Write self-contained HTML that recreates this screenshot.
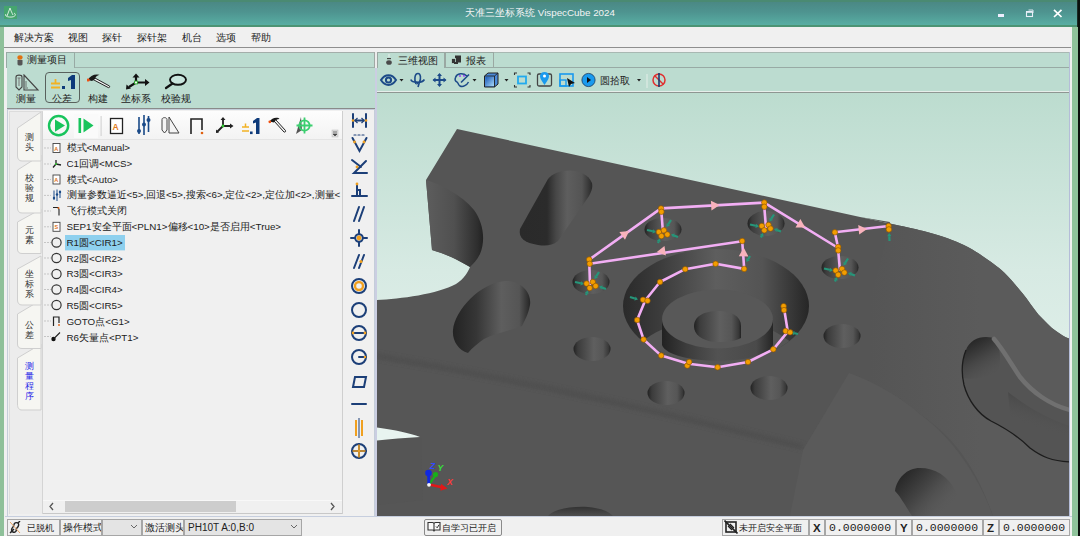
<!DOCTYPE html>
<html><head><meta charset="utf-8">
<style>
*{margin:0;padding:0;box-sizing:border-box}
html,body{width:1080px;height:536px;overflow:hidden;background:#f0f0f0;font-family:"Liberation Sans",sans-serif;font-size:9.7px;color:#222}
.a{position:absolute}
#title{left:0;top:0;width:1080px;height:27px;background:linear-gradient(#4a8682,#4e9490 45%,#5ab2a6)}
#lstrip{left:0;top:27px;width:4px;height:509px;background:#8ec099}
#rstrip{left:1072px;top:27px;width:6.5px;height:509px;background:#8fc39b;border-left:0}
#menu{left:4px;top:27px;width:1067px;height:21px;background:#f0f0f0;border-bottom:1px solid #8e8e8e}
#menu span{position:absolute;top:5px}
.teal{background:#bcdcd0}
.tab{position:absolute;top:52px;height:16px;border:1px solid #98aaa4;border-bottom:none;background:#bcdcd0}
.rib span{position:absolute;font-size:9.7px}
.tree{position:absolute;left:45px;width:300px}
.row{position:absolute;left:0;height:15px;white-space:nowrap;font-size:9.7px;color:#222}
.vt{position:absolute;font-size:9.2px;color:#333;width:11px;line-height:9.8px;text-align:center}
.sb{position:absolute;top:518.5px;height:17.5px;border:1px solid #a6a6a6;background:#f0f0f0;font-size:9.8px;line-height:16px;padding-left:3px;white-space:nowrap;overflow:hidden}
.mono{font-family:"Liberation Mono",monospace;font-size:11.5px}
</style></head><body>
<div id="title" class="a"></div>
<div class="a" style="left:0;top:0;width:1080px;height:2px;background:#4a8a72"></div>
<div class="a" style="left:0;top:25px;width:1080px;height:2px;background:#4c9474"></div>
<div class="a" style="left:1077px;top:0;width:3px;height:27px;background:#1a2a24"></div>
<svg class="a" style="left:4px;top:6px" width="13" height="13" viewBox="0 0 13 13"><rect width="13" height="13" fill="#45a56e"/><path d="M6,2 L3,10 M6,2 C7,5 8,7 9,9 M2,8 C0,10 4,11.5 8,11 C12,10.5 12,8 10,7" fill="none" stroke="#e8f4ec" stroke-width="0.9"/></svg>
<svg class="a" style="left:995px;top:8px" width="70" height="12" viewBox="995 8 70 12"><rect x="998" y="14" width="6" height="3" fill="#eef"/><rect x="1026.5" y="12" width="6" height="4.5" fill="none" stroke="#e8eef8" stroke-width="1.1"/><rect x="1026" y="11" width="6.5" height="1.6" fill="#e8eef8"/><path d="M1028.5,10 L1033,10 L1033,13" fill="none" stroke="#e8eef8" stroke-width="0.9"/><path d="M1054,9.8 L1061.5,17 M1061.5,9.8 L1054,17" stroke="#fff" stroke-width="1.7"/></svg>
<div class="a" style="left:0;top:7.3px;width:1080px;text-align:center;color:#f4f4f4;font-size:9.8px">天准三坐标系统 VispecCube 2024</div>
<div id="lstrip" class="a"></div>
<div id="rstrip" class="a"></div>
<div class="a" style="left:1078.3px;top:0;width:2px;height:536px;background:#0a0f0c"></div>
<div id="menu" class="a">
<span style="left:10px">解决方案</span><span style="left:64px">视图</span><span style="left:98px">探针</span><span style="left:133px">探针架</span><span style="left:178px">机台</span><span style="left:212px">选项</span><span style="left:247px">帮助</span>
</div>

<!-- LEFT PANEL -->
<div class="a teal" style="left:7px;top:52px;width:368px;height:57px;border-top:1px solid #a4aeaa"></div>
<div class="a" style="left:74.8px;top:67px;width:300px;height:1px;background:#9fb3ac"></div>
<div class="a" style="left:7px;top:108px;width:368px;height:1px;background:#8a8a8a"></div>
<div class="tab" style="left:6.3px;width:68.5px;height:16px"></div>
<svg class="a" style="left:16px;top:55px" width="8" height="11" viewBox="0 0 8 11"><ellipse cx="4" cy="2.5" rx="2.6" ry="2.3" fill="#e07010"/><path d="M1.5,5 L6.5,5 L6.5,9 C6.5,11 1.5,11 1.5,9Z" fill="#555"/></svg>
<div class="a" style="left:27px;top:53px;font-size:10px">测量项目</div>
<div class="rib">
<span style="left:16px;top:92.5px">测量</span>
<span style="left:52px;top:92.5px">公差</span>
<span style="left:88px;top:92.5px">构建</span>
<span style="left:121px;top:92.5px">坐标系</span>
<span style="left:161px;top:92.5px">校验规</span>
</div>
<div class="a" style="left:45px;top:72px;width:35px;height:31px;border:1.6px solid #59615d;border-radius:4px"></div>
<!-- ribbon icons -->
<svg class="a" style="left:14px;top:74px" width="26" height="18" viewBox="0 0 26 18">
<path d="M2,3 C2,0.5 8,0.5 8,3 L8,13 L5,16 L2,13Z" fill="none" stroke="#444" stroke-width="1.1"/><path d="M3.5,4 L6.5,4 M5,4 L5,12" stroke="#777" stroke-width="1"/>
<path d="M10,1 L24,16 L10,16Z" fill="none" stroke="#444" stroke-width="1.1"/><path d="M11,8 L13,8 M11,10 L13,10 M11,12 L13,12 M11,14 L14,14" stroke="#555" stroke-width="0.8"/>
</svg>
<svg class="a" style="left:49px;top:73px" width="29" height="18" viewBox="0 0 29 18">
<path d="M2,10.5 L11,10.5 M6.5,6 L6.5,11 M2,14.5 L11,14.5" stroke="#f2b224" stroke-width="1.8"/>
<rect x="13" y="13" width="3" height="3" fill="#0e3a7a"/><path d="M19,5 L23,2 L26,2 L26,16 L22,16 L22,7 L19,8Z" fill="#0e3a7a"/>
</svg>
<svg class="a" style="left:87px;top:73px" width="24" height="18" viewBox="0 0 24 18"><path d="M7,4.5 L22.5,13 C23,14 22.3,15 21.3,14.6 L6,6.5Z" fill="#f2f2f2" stroke="#222" stroke-width="1"/><path d="M0.8,7 C2.5,3.5 6,1.5 10,1.5 L12.5,1.8 C10,2.5 8.5,4 8,6 L5,8 Z" fill="#1a1a1a"/><circle cx="1.2" cy="7" r="1.6" fill="#f05010"/></svg>
<svg class="a" style="left:125px;top:73px" width="26" height="18" viewBox="0 0 26 18"><path d="M11,9.5 L11,3.5 M11,9.5 L21,9.5 M11,9.5 L4,14" stroke="#111" stroke-width="2.2"/><path d="M7.5,4.5 L11,0.5 L14.5,4.5Z M20,6 L24.5,9.5 L20,13Z M1.5,11.5 L1,16.5 L6,15.5Z" fill="#111"/><rect x="9.6" y="8.1" width="2.8" height="2.8" fill="#fff" stroke="#2a2" stroke-width="0.9"/></svg>
<svg class="a" style="left:164px;top:73px" width="24" height="18" viewBox="0 0 24 18"><ellipse cx="14" cy="6.8" rx="8" ry="5" fill="#c8e4dc" stroke="#111" stroke-width="1.9"/><path d="M8.5,10.5 L2,15" stroke="#111" stroke-width="2.2" stroke-linecap="round"/></svg>

<!-- tree panel -->
<div class="a" style="left:7px;top:109px;width:368px;height:408px;background:#f0f0f0;border:1px solid #c4cdd9"></div>
<div class="a" style="left:9px;top:111px;width:34px;height:403px;background:#ececec;border-right:1px solid #d4d4d4;border-left:1px solid #dcdcdc;border-top:1px solid #dcdcdc"></div>
<svg class="a" style="left:9px;top:111px" width="34" height="403" viewBox="9 111 34 403">
<g fill="#f6f6f2" stroke="#cfcfcf" stroke-width="1">
<path d="M41,344 L17.5,358 L17.5,404 C17.5,408 19,410 22,410 L41,410Z"/>
<path d="M41,300 L17.5,314 L17.5,344 C17.5,347 19,348.5 22,348.5 L41,348.5Z"/>
<path d="M41,256 L17.5,269 L17.5,300 C17.5,303 19,305 22,305 L41,305Z"/>
<path d="M41,209 L17.5,222 L17.5,249 C17.5,252 19,253.5 22,253.5 L41,253.5Z"/>
<path d="M41,155 L17.5,170 L17.5,208 C17.5,211 19,213 22,213 L41,213Z"/>
<path d="M41,112 L17.5,128 L17.5,156 C17.5,159 19,161 22,161 L41,161Z"/>
</g>
</svg>
<div class="vt" style="left:24px;top:133.2px">测<br>头</div>
<div class="vt" style="left:24px;top:174.3px">校<br>验<br>规</div>
<div class="vt" style="left:24px;top:226.2px">元<br>素</div>
<div class="vt" style="left:24px;top:270.3px">坐<br>标<br>系</div>
<div class="vt" style="left:24px;top:321.2px">公<br>差</div>
<div class="vt" style="left:24px;top:362.4px;color:#2828e8">测<br>量<br>程<br>序</div>

<div class="a" style="left:43px;top:111px;width:299px;height:29px;background:linear-gradient(#fdfdfd,#f3f3f3);border-bottom:1px solid #e4e4e4"></div>
<div class="a" style="left:341.5px;top:111px;width:1px;height:403px;background:#cfcfcf"></div>
<!-- tree toolbar icons -->
<svg class="a" style="left:43px;top:111px" width="299" height="29" viewBox="43 111 299 29">
<circle cx="58.6" cy="125.6" r="9.6" fill="none" stroke="#18c45c" stroke-width="2.4"/><path d="M55,119.5 L65,125.6 L55,131.7Z" fill="#18c45c"/>
<rect x="74" y="114" width="24" height="24" fill="#fafafa"/>
<rect x="78.5" y="118" width="2.6" height="15" fill="#18c45c"/><path d="M83.5,118.5 L93.5,125.6 L83.5,132.5Z" fill="#18c45c"/>
<rect x="100.6" y="116" width="1" height="20" fill="#d0d0d0"/>
<rect x="110.5" y="118.5" width="12" height="15" fill="#fff" stroke="#222" stroke-width="1.3"/><text x="112.5" y="130" font-family="Liberation Sans" font-size="8.5" font-weight="bold" fill="#e07a20">A</text>
<path d="M139,117 L139,134 M144,115 L144,135 M148.5,116 L148.5,132" stroke="#1a4a88" stroke-width="1.6"/><circle cx="139" cy="131" r="2" fill="#1a4a88"/><circle cx="144" cy="124.5" r="2" fill="#1a4a88"/><circle cx="148.5" cy="120" r="2" fill="#1a4a88"/>
<g transform="translate(161,117)"><path d="M1,2.5 C1,0 6,0 6,2.5 L6,13 L3.5,16 L1,13Z" fill="#f4f4f4" stroke="#444" stroke-width="1"/><path d="M8,0 L18,16 L8,16Z" fill="#f4f4f4" stroke="#444" stroke-width="1"/></g>
<path d="M191,134 L191,119 L202,119 L202,130" fill="none" stroke="#222" stroke-width="1.6"/><circle cx="202" cy="133" r="1.3" fill="#e06010"/>
<g transform="translate(216,117)"><path d="M7,9 L7,2 M7,9 L16,9 M7,9 L1,15" stroke="#222" stroke-width="1.8"/><path d="M4.5,3 L7,0 L9.5,3Z M14,6.5 L17.5,9 L14,11.5Z M0,12.5 L0,16 L3,15.5Z" fill="#222"/><circle cx="7" cy="9" r="1.4" fill="#3c3"/></g>
<path d="M242,127 L249,127 M245.5,123.5 L245.5,127.5 M242,131 L249,131" stroke="#f2b224" stroke-width="1.5"/>
<rect x="250" y="131.5" width="2.6" height="2.6" fill="#0e3a7a"/><path d="M253,121 L257,118 L259.5,118 L259.5,134 L256,134 L256,122.5 L253,123.5Z" fill="#0e3a7a"/>
<g transform="translate(268,117)"><path d="M7.5,2.5 L17.5,13.5 C18,14.5 17,15.5 16,15 L6,4Z" fill="#f4f4f4" stroke="#222" stroke-width="1"/><path d="M1.5,4.5 C3.5,1.5 7,0 10.5,1 L11.5,2 C9,2 7,3.5 6,5.5 Z" fill="#1a1a1a"/><circle cx="1.8" cy="4.8" r="1.4" fill="#f05010"/></g>
<g transform="translate(295,116)"><path d="M6,1 L1,18 L7,14Z" fill="#555"/><circle cx="9.5" cy="9.5" r="5.2" fill="none" stroke="#3ccf70" stroke-width="1.8"/><path d="M9.5,1.5 L9.5,17.5 M1.5,9.5 L17.5,9.5" stroke="#3ccf70" stroke-width="1.8"/></g>
<rect x="332" y="130" width="6" height="7" fill="#ddd" stroke="#bbb" stroke-width="0.5"/><path d="M333,134 L337,134 L335,136Z M333,132 L337,132" stroke="#444" stroke-width="0.7" fill="#444"/>
</svg>

<!-- tree rows -->
<svg class="a" style="left:43px;top:140px" width="299" height="210" viewBox="43 140 299 210">
<g stroke="#9a9a9a" stroke-width="1" stroke-dasharray="1,2">
<path d="M44.5,148 L51,148 M44.5,164 L51,164 M44.5,179.5 L51,179.5 M44.5,195.4 L51,195.4 M44.5,211 L51,211 M44.5,226.8 L51,226.8 M44.5,242.5 L51,242.5 M44.5,258 L51,258 M44.5,274 L51,274 M44.5,289.5 L51,289.5 M44.5,305 L51,305 M44.5,321 L51,321 M44.5,336.5 L51,336.5"/>
</g>
<g fill="none" stroke="#333" stroke-width="1.2">
<circle cx="56.5" cy="242.5" r="4.6"/><circle cx="56.5" cy="258" r="4.6"/><circle cx="56.5" cy="274" r="4.6"/><circle cx="56.5" cy="289.5" r="4.6"/><circle cx="56.5" cy="305" r="4.6"/>
</g>
<rect x="53" y="143.5" width="7" height="9" fill="#fff" stroke="#444" stroke-width="0.9"/><text x="54.3" y="150.5" font-size="5.5" fill="#e07020" font-family="Liberation Sans" font-weight="bold">A</text>
<rect x="53" y="175" width="7" height="9" fill="#fff" stroke="#444" stroke-width="0.9"/><text x="54.3" y="182" font-size="5.5" fill="#e07020" font-family="Liberation Sans" font-weight="bold">A</text>
<rect x="53" y="222.3" width="7" height="9" fill="#fff" stroke="#444" stroke-width="0.9"/><text x="54.5" y="229.3" font-size="5.5" fill="#e07020" font-family="Liberation Sans" font-weight="bold">S</text>
<g transform="translate(52,159)"><path d="M4,5 L4,1 M4,5 L9,6 M4,5 L1,8.5" stroke="#222" stroke-width="1.3"/><circle cx="4" cy="5" r="1" fill="#3c3"/></g>
<path d="M54,190.5 L54,200 M57,189.5 L57,201 M60,190.5 L60,198" stroke="#1a4a88" stroke-width="1"/><circle cx="54" cy="198" r="1.2" fill="#1a4a88"/><circle cx="57" cy="194.5" r="1.2" fill="#1a4a88"/><circle cx="60" cy="192" r="1.2" fill="#1a4a88"/>
<path d="M53,207.5 L58,207.5 L59,209.5 L59,215.5" fill="none" stroke="#222" stroke-width="1.1"/><circle cx="58.5" cy="208" r="0.9" fill="#e06010"/>
<path d="M53.5,326 L53.5,317 L59,317 L59,323" fill="none" stroke="#222" stroke-width="1.2"/><circle cx="59" cy="325" r="0.9" fill="#e06010"/>
<circle cx="53.5" cy="339" r="2.2" fill="#111"/><path d="M54,338.5 L60,332.5" stroke="#222" stroke-width="1.1"/>
<rect x="65" y="235" width="60" height="15.4" fill="#8ed0ee"/>
</svg>
<div class="a" style="left:66.5px;top:140px;width:275px;height:210px;overflow:hidden;white-space:nowrap;font-size:9.8px;line-height:15.8px;color:#222">
<div style="height:15.8px">模式&lt;Manual&gt;</div>
<div style="height:15.8px">C1回调&lt;MCS&gt;</div>
<div style="height:15.8px">模式&lt;Auto&gt;</div>
<div style="height:15.8px">测量参数逼近&lt;5&gt;,回退&lt;5&gt;,搜索&lt;6&gt;,定位&lt;2&gt;,定位加&lt;2&gt;,测量&lt;</div>
<div style="height:15.8px">飞行模式关闭</div>
<div style="height:15.8px">SEP1安全平面&lt;PLN1&gt;偏移&lt;10&gt;是否启用&lt;True&gt;</div>
<div style="height:15.8px">R1圆&lt;CIR1&gt;</div>
<div style="height:15.8px">R2圆&lt;CIR2&gt;</div>
<div style="height:15.8px">R3圆&lt;CIR3&gt;</div>
<div style="height:15.8px">R4圆&lt;CIR4&gt;</div>
<div style="height:15.8px">R5圆&lt;CIR5&gt;</div>
<div style="height:15.8px">GOTO点&lt;G1&gt;</div>
<div style="height:15.8px">R6矢量点&lt;PT1&gt;</div>
</div>
<!-- scrollbar -->
<div class="a" style="left:43px;top:499.5px;width:299px;height:1px;background:#f8f8f8"></div>
<div class="a" style="left:43px;top:500.5px;width:299px;height:12.5px;background:#f0f0f0"></div>
<div class="a" style="left:43px;top:513px;width:299px;height:1px;background:#c8c8c8"></div>
<div class="a" style="left:65px;top:501px;width:171px;height:11px;background:#cdcdcd"></div>
<svg class="a" style="left:43px;top:500px" width="299" height="13" viewBox="43 500 299 13"><path d="M53,503 L50,506.5 L53,510 M331,503 L334,506.5 L331,510" fill="none" stroke="#555" stroke-width="1.3"/></svg>

<!-- vertical toolbar -->
<svg class="a" style="left:343px;top:109px" width="32" height="360" viewBox="343 109 32 360">
<g stroke="#1c3f78" stroke-width="2" fill="none" stroke-linecap="round">
<path d="M353,114 L353,127 M366,114 L366,127 M355,120.5 L364,120.5"/>
<path d="M352,137 L359,151 L366,137 M352,137 L366,137" stroke-width="0"/>
<path d="M352.5,138 L359.5,151 L366.5,138"/><path d="M354,135 L356,135 M358,135 L360,135 M362,135 L364,135" stroke-width="1.2"/>
<path d="M352,160 L361,167 M366,161 L354,173 L367,173"/>
<path d="M352,196 L367,196 M357,184 L357,195 M357,190 L360,190 L360,195"/>
<path d="M354,221 L359,207 M359,221 L364,207"/>
<circle cx="359" cy="238" r="3.8"/><path d="M359,230 L359,234 M359,242 L359,246 M351,238 L355,238 M363,238 L367,238"/>
<path d="M354,268 L359,255 M359,268 L364,255"/>
<circle cx="359" cy="286" r="7"/>
<circle cx="359" cy="310" r="7"/>
<circle cx="359" cy="333" r="7"/><path d="M352,333 L366,333"/>
<circle cx="359" cy="357" r="7"/><path d="M359,357 L366,357"/>
<path d="M353,387 L355,377 L366,377 L364,387Z"/>
<path d="M352,404 L366,404"/>
<circle cx="359" cy="451" r="7"/><path d="M352,451 L366,451 M359,444 L359,458"/>
</g>
<path d="M355,120.5 L357.5,118 M355,120.5 L357.5,123 M364,120.5 L361.5,118 M364,120.5 L361.5,123" stroke="#1c3f78" stroke-width="1.2" fill="none"/>
<circle cx="353" cy="120.5" r="1.3" fill="#f0a020"/><circle cx="366" cy="120.5" r="1.3" fill="#f0a020"/>
<circle cx="354.5" cy="142" r="1.4" fill="#f0a020"/><circle cx="364" cy="142" r="1.4" fill="#f0a020"/>
<circle cx="357" cy="167" r="1.4" fill="#f0a020"/>
<circle cx="357" cy="184" r="1.4" fill="#f0a020"/>
<circle cx="359" cy="238" r="2.4" fill="#f0a020"/>
<circle cx="361" cy="261.5" r="1.6" fill="#f0a020"/>
<circle cx="359" cy="286" r="4" fill="none" stroke="#f0a020" stroke-width="2.4"/>
<circle cx="353" cy="333" r="1.4" fill="#f0a020"/><circle cx="365" cy="333" r="1.4" fill="#f0a020"/>
<circle cx="365" cy="357" r="1.3" fill="#f0a020"/>
<path d="M356,420 L356,436 M362,420 L362,436" stroke="#f0a020" stroke-width="2"/><path d="M359,418 L359,438" stroke="#1c3f78" stroke-width="1"/>
<path d="M352.5,451 L365.5,451 M359,444.5 L359,457.5" stroke="#f0a020" stroke-width="1.6"/>
</svg>

<!-- RIGHT PANEL -->
<div class="a" style="left:374px;top:52px;width:3.6px;height:15.5px;background:#ececec;border-left:1px solid #a0a8a4;border-right:1px solid #a0a8a4"></div>
<div class="a" style="left:374.5px;top:67.5px;width:2.5px;height:449.5px;background:#cbcee2"></div>
<div class="a teal" style="left:377px;top:52px;width:693px;height:41px;border-right:1px solid #a8b8b2"></div>
<div class="a" style="left:377px;top:52px;width:693px;height:1px;background:#a8b8b2"></div>
<div class="a" style="left:445px;top:67px;width:625px;height:1px;background:#98aaa4"></div>
<div class="a" style="left:377px;top:91px;width:693px;height:1px;background:#e6eeea"></div>
<div class="a" style="left:377px;top:92px;width:693px;height:1px;background:#8e9692"></div>
<div class="tab" style="left:377px;width:68px;height:16px;border-color:#9aa8a2"></div>
<div class="tab" style="left:445px;width:49px;height:15px;border-color:#9aa8a2"></div>
<svg class="a" style="left:385px;top:54px" width="8" height="12" viewBox="0 0 8 12"><path d="M4,0 L4,3" stroke="#f0f0f0" stroke-width="0.9"/><path d="M2,4.6 L6,4.6" stroke="#444" stroke-width="1.2"/><ellipse cx="4" cy="8.5" rx="2.8" ry="2.3" fill="#4a4a4a"/></svg>
<div class="a" style="left:397.5px;top:53.5px;font-size:10px">三维视图</div>
<svg class="a" style="left:451px;top:55px" width="11" height="10" viewBox="0 0 11 10"><rect x="4" y="0.5" width="6" height="7" fill="#333"/><rect x="0.5" y="3.5" width="4" height="5" fill="#333" stroke="#bcdcd0" stroke-width="0.8"/><rect x="3" y="7" width="4" height="2" fill="#333"/></svg>
<div class="a" style="left:466px;top:53.5px;font-size:10px">报表</div>
<svg class="a" style="left:377px;top:68px" width="300" height="23" viewBox="377 68 300 23">
<g fill="none" stroke="#1c4a88" stroke-width="2">
<path d="M381,80 C385,73.5 392,73.5 396,80 C392,86.5 385,86.5 381,80Z"/><circle cx="388.5" cy="80" r="2.6"/>
<path d="M410.8,79.5 C412,83 422,83.5 424.4,79.5" stroke-width="1.6"/><path d="M416,84 C414,80 414.5,73.5 418,73.5 C421,73.5 421,79 419.5,82 L418,87" stroke-width="1.6"/>
<path d="M439.5,74.5 L439.5,85.5 M433.5,80 L445.5,80"/>
<path d="M467,76 C463,72.5 457,73 455.5,77.5 C454.5,80 456,81.5 457,82 C458.5,83 458,85 460,86 C463,87.5 467,85 468.5,82" stroke-width="1.5"/><path d="M461,82.5 L469,74.5" stroke-width="1.6"/>
</g>
<path d="M439.5,73 L437,76 L442,76Z M439.5,87 L437,84 L442,84Z M432.5,80 L435.5,77.5 L435.5,82.5Z M446.5,80 L443.5,77.5 L443.5,82.5Z" fill="#1c4a88"/><path d="M416.5,81 L419,83 L416.5,85Z" fill="#1c4a88"/>
<circle cx="460" cy="76" r="1.1" fill="#9a50f0"/><circle cx="464" cy="75.8" r="1.1" fill="#9a50f0"/>
<path d="M399.5,79 L403.5,79 L401.5,81.5Z M472.5,79 L476.5,79 L474.5,81.5Z M504.5,79 L508.5,79 L506.5,81.5Z M637,79 L641,79 L639,81.5Z" fill="#222"/>
<path d="M484.5,76 L488,73 L498,73 L498,84 L494.5,87 L484.5,87Z" fill="#4a8ad8" stroke="#222" stroke-width="1"/><path d="M484.5,76 L494.5,76 L498,73 M494.5,76 L494.5,87" fill="none" stroke="#222" stroke-width="0.9"/><defs><linearGradient id="cubeg" x1="0" y1="0" x2="1" y2="1"><stop offset="0" stop-color="#1a5ab8"/><stop offset="1" stop-color="#a8d8f8"/></linearGradient></defs><path d="M485.5,77 L494,77 L494,86 L485.5,86Z" fill="url(#cubeg)"/>
<path d="M514.5,75 L514.5,73 L517,73 M527.5,73 L530,73 L530,75 M514.5,85 L514.5,87 L517,87 M527.5,87 L530,87 L530,85" fill="none" stroke="#333" stroke-width="1.1"/>
<rect x="518" y="76.5" width="8" height="7" fill="none" stroke="#22aaee" stroke-width="1.8"/>
<rect x="537.5" y="74" width="14" height="12" rx="1.5" fill="none" stroke="#444" stroke-width="1.3"/><path d="M544.5,85 C541,80 540,78 540,76 C540,73.5 542,72 544.5,72 C547,72 549,73.5 549,76 C549,78 548,80 544.5,85Z" fill="#1a9aee"/><circle cx="544.5" cy="76" r="1.5" fill="#fff"/>
<rect x="560" y="74" width="13" height="12" fill="none" stroke="#1a9aee" stroke-width="1.6"/><rect x="560" y="80" width="6" height="6" fill="none" stroke="#1a9aee" stroke-width="1.4"/><path d="M567,78 L575,83 L571,84 L569,87Z" fill="#111"/>
<circle cx="588.5" cy="80" r="6.6" fill="#1a9aee" stroke="#1c3a60" stroke-width="0.8"/><path d="M587,77 L591,80 L587,83Z" fill="#111"/>
<rect x="646.5" y="74" width="1" height="14" fill="#e4eee8"/>
<circle cx="659" cy="80" r="6" fill="none" stroke="#e03030" stroke-width="1.5"/><path d="M654.5,75.5 L663.5,84.5" stroke="#e03030" stroke-width="1.4"/><path d="M659,73 L659,87" stroke="#1a3a70" stroke-width="1.6"/>
</svg>
<div class="a" style="left:599.5px;top:74px;font-size:10px">圆拾取</div>

<!-- 3D view -->
<div class="a" style="left:1069.3px;top:52px;width:1.2px;height:465px;background:#b4bcd8"></div>
<div class="a" style="left:1070.5px;top:52px;width:1.5px;height:484px;background:#f0f2f0"></div>
<div class="a" style="left:377px;top:93px;width:692.3px;height:423px;background:linear-gradient(#bddcd0,#dcebe5);overflow:hidden">
<svg width="693" height="423" viewBox="377 93 693 423" style="position:absolute;left:0;top:0">
<defs>
<linearGradient id="bg" x1="0" y1="0" x2="0" y2="1"><stop offset="0" stop-color="#bcdccf"/><stop offset="0.42" stop-color="#d7eae3"/><stop offset="0.8" stop-color="#e4f2ed"/><stop offset="1" stop-color="#eaf5f1"/></linearGradient>
<linearGradient id="cut" gradientUnits="userSpaceOnUse" x1="428" y1="0" x2="486" y2="0"><stop offset="0" stop-color="#5c5c5c"/><stop offset="0.45" stop-color="#505050"/><stop offset="0.85" stop-color="#2e2e2e"/><stop offset="1" stop-color="#1c1c1c"/></linearGradient>
<linearGradient id="slot" gradientUnits="userSpaceOnUse" x1="519" y1="0" x2="593" y2="0"><stop offset="0" stop-color="#2a2a2a"/><stop offset="0.38" stop-color="#2b2b2b"/><stop offset="0.5" stop-color="#474747"/><stop offset="0.65" stop-color="#5e5e5e"/><stop offset="0.85" stop-color="#545454"/><stop offset="1" stop-color="#262626"/></linearGradient>
<linearGradient id="hole" gradientUnits="userSpaceOnUse" x1="453" y1="0" x2="531" y2="0"><stop offset="0" stop-color="#232323"/><stop offset="0.3" stop-color="#363636"/><stop offset="0.62" stop-color="#5e5e5e"/><stop offset="0.85" stop-color="#555"/><stop offset="1" stop-color="#222"/></linearGradient>
<linearGradient id="sh" x1="0" y1="0" x2="1" y2="0"><stop offset="0" stop-color="#222"/><stop offset="0.12" stop-color="#3c3c3c"/><stop offset="0.55" stop-color="#5f5f5f"/><stop offset="0.8" stop-color="#565656"/><stop offset="0.95" stop-color="#383838"/><stop offset="1" stop-color="#222"/></linearGradient>
<linearGradient id="cb" x1="0" y1="0" x2="1" y2="0"><stop offset="0" stop-color="#2a2a2a"/><stop offset="0.2" stop-color="#3c3c3c"/><stop offset="0.5" stop-color="#5e5e5e"/><stop offset="0.75" stop-color="#545454"/><stop offset="1" stop-color="#262626"/></linearGradient>
<linearGradient id="boss" x1="0" y1="0" x2="1" y2="0"><stop offset="0" stop-color="#222"/><stop offset="0.22" stop-color="#3c3c3c"/><stop offset="0.5" stop-color="#525252"/><stop offset="0.85" stop-color="#4a4a4a"/><stop offset="1" stop-color="#262626"/></linearGradient>
<linearGradient id="bh" x1="0" y1="0" x2="1" y2="1"><stop offset="0" stop-color="#262626"/><stop offset="0.6" stop-color="#4e4e4e"/><stop offset="1" stop-color="#555"/></linearGradient>
<radialGradient id="shoulder" cx="0.6" cy="0.3" r="0.6"><stop offset="0" stop-color="#5e5e5e"/><stop offset="1" stop-color="#555" stop-opacity="0"/></radialGradient>
<linearGradient id="shoulderg" gradientUnits="userSpaceOnUse" x1="870" y1="300" x2="980" y2="300"><stop offset="0" stop-color="#555"/><stop offset="1" stop-color="#5b5b5b"/></linearGradient>
<g id="ball"><circle r="2.75" fill="#f29d00" stroke="#8a5000" stroke-width="0.6"/></g>
</defs>
<rect x="377" y="93" width="693" height="423" fill="url(#bg)"/>
<path d="M457,129 L900,225.7 C915,228.5 940,235 952,240 C965,245 970,248 978,253 C990,261 997,266 1004.4,272.7 C1012,280 1017,287 1022.7,293.5 C1028,300 1033,308 1038.4,314.4 C1045,321 1050,327 1056.7,331.4 C1061,334.5 1065,337 1070,339 L1070,516 L377,516 L377,440 L419,437 L377,428 L377,300 C400,299 438,294 456,284 C464,279 468,272 470,267 C455,258 445,254 432,250 L426,180 Z" fill="#555"/>
<!-- shading regions -->
<path d="M860,217 L900,225.7 C915,228.5 940,235 952,240 C965,245 970,248 978,253 C990,261 997,266 1004.4,272.7 C1012,280 1017,287 1022.7,293.5 C1028,300 1033,308 1038.4,314.4 C1045,321 1050,327 1056.7,331.4 C1061,334.5 1065,337 1070,339 L1070,516 L993,516 C980,478 960,440 921,415 C900,400 870,380 849,373 C860,330 880,270 890,222 Z" fill="url(#shoulderg)"/>
<path d="M377,359 C560,390 700,425 803,450 L849,373 C875,382 905,400 921,415 C955,440 980,480 993,516 L377,516 Z" fill="#565656"/>
<filter id="blur2" x="-10%" y="-50%" width="120%" height="200%"><feGaussianBlur stdDeviation="2"/></filter>
<path d="M377,356 C560,387 700,422 803,447" fill="none" stroke="#4d4d4d" stroke-width="5" filter="url(#blur2)" opacity="0.8"/>
<path d="M803,450 L849,373 C875,382 905,400 921,415 C955,440 980,480 993,516 L790,516 Z" fill="#5a5a5a"/>
<path d="M377,437 L421,438 L423,500 L377,505 Z" fill="#555"/>
<path d="M377,427.5 C395,430 410,433 420,437 C405,438 390,439 377,440.5Z" fill="#e8f4f0"/>
<!-- left cutout -->
<path d="M426,180 C440,184 462,195 474,210 C483,222 486,240 480,254 C477,260 473,264 470,267 C458,260 446,254 432,250 Z" fill="url(#cut)"/>
<!-- slot -->
<path d="M548,179 C556,168 585,166 592,183 C593,188 591,192 589,196 L558,241 C552,246 545,246 538,245 C525,243 518,238 520,229 Z" fill="url(#slot)"/>
<!-- hole lower-left -->
<path d="M505,281 C520,280 532,292 530,305 C528,315 525,320 522,326 C510,331 495,333 484,339 C478,343 472,348 468,353 C458,350 452,340 453,330 C455,310 480,283 505,281 Z" fill="url(#hole)"/>
<!-- counterbore -->
<clipPath id="rimclip"><ellipse cx="716" cy="306" rx="93" ry="57"/></clipPath>
<ellipse cx="716" cy="306" rx="93" ry="57" fill="url(#cb)"/>
<ellipse cx="716" cy="376" rx="93" ry="57" fill="#555" clip-path="url(#rimclip)"/>
<path d="M662,318 L662,345 C670,366 766,366 773,345 L773,318 Z" fill="url(#boss)"/>
<ellipse cx="717.5" cy="319" rx="55.5" ry="29.5" fill="#585858"/>
<path d="M694,326 C694,316 705,311 718,311 C731,311 741,316 741,326 L741,338 C734,342 724,342 718,342 C705,342 694,336 694,326Z" fill="url(#sh)"/>
<!-- small holes -->
<g>
<ellipse cx="591" cy="282" rx="18.5" ry="12" fill="url(#sh)"/>
<ellipse cx="663" cy="229.5" rx="18.5" ry="11.5" fill="url(#sh)"/>
<ellipse cx="766" cy="223.5" rx="18.5" ry="12.5" fill="url(#sh)"/>
<ellipse cx="840" cy="267.5" rx="18.5" ry="11.5" fill="url(#sh)"/>
<ellipse cx="592" cy="349" rx="18.5" ry="12" fill="url(#sh)"/>
<ellipse cx="666" cy="393" rx="18.5" ry="12" fill="url(#sh)"/>
<ellipse cx="769" cy="388" rx="18.5" ry="12" fill="url(#sh)"/>
<ellipse cx="842" cy="336" rx="18.5" ry="12" fill="url(#sh)"/>
</g>
<!-- bottom holes -->
<linearGradient id="bh2" gradientUnits="userSpaceOnUse" x1="903" y1="472" x2="945" y2="510"><stop offset="0" stop-color="#262626"/><stop offset="0.5" stop-color="#464646"/><stop offset="1" stop-color="#575757" stop-opacity="0"/></linearGradient>
<path d="M895,491 C897,478 907,468 920,468 C935,468 948,476 955,490 C960,500 962,508 963,516 L912,516 C905,505 900,496 895,491Z" fill="url(#bh2)"/>
<linearGradient id="bh3" x1="0" y1="0" x2="0" y2="1"><stop offset="0" stop-color="#333"/><stop offset="1" stop-color="#4e4e4e"/></linearGradient><path d="M548,516 C554,509 572,506 588,507 C600,508 608,511 613,516Z" fill="url(#bh3)"/>
<!-- shell feature -->
<linearGradient id="shellg" gradientUnits="userSpaceOnUse" x1="968" y1="342" x2="990" y2="380"><stop offset="0" stop-color="#262626"/><stop offset="0.45" stop-color="#444"/><stop offset="1" stop-color="#555" stop-opacity="0"/></linearGradient>
<linearGradient id="wallg" gradientUnits="userSpaceOnUse" x1="1030" y1="400" x2="1022" y2="425"><stop offset="0" stop-color="#4a4a4a"/><stop offset="1" stop-color="#555" stop-opacity="0"/></linearGradient>
<path d="M966,350 C970,338 985,334 996,339 C1003,348 1010,362 1020,377 C1032,392 1050,405 1070,410 L1070,462 C1052,461 1042,457 1030,448 C1020,438 1005,428 991,421 C978,414 968,400 964,385 C961,372 962,360 966,350Z" fill="#545454"/>
<path d="M966,350 C970,338 985,334 996,339 C1000,350 1002,360 998,372 C985,378 972,380 963,378 C962,366 963,357 966,350Z" fill="url(#shellg)"/>
<path d="M1008,392 C1025,405 1045,418 1070,426 L1070,448 C1045,440 1025,428 1010,415Z" fill="url(#wallg)"/>
<path d="M966,350 C962,360 961,372 964,385 C968,400 978,414 991,421 C1005,428 1020,438 1030,448 C1042,457 1052,461 1070,462" fill="none" stroke="#1c1c1c" stroke-width="1.3"/>
<path d="M994,339 C1002,348 1010,362 1020,377 C1032,392 1050,405 1070,410" fill="none" stroke="#707070" stroke-width="4.5" stroke-linecap="round"/>
<!-- probe path -->
<g fill="none" stroke="#f2aef4" stroke-width="2.6" stroke-linejoin="round">
<polyline points="590,285 589.2,259.6 661,208.4 764.3,202.6 838.2,248 834.8,232.3 888.6,226"/>
<polyline points="661.4,211.8 663,233"/>
<polyline points="764.3,206.8 766,228"/>
<polyline points="838.2,250.4 840,271"/>
<polyline points="589.7,263.8 742.2,241.2 744.2,268.9 715.6,263.8 685.2,269.2 660,282 645.3,300.3 637.1,320 643.6,339.5 661.2,355.6 688.3,363.8 717.6,367.3 748,362 773.3,349.3 787.8,331.7 784,308"/>
</g>
<g fill="#f8b2bc">
<path d="M629.1,230.9 L625.0,239.7 L619.4,231.9Z"/>
<path d="M719.7,205.1 L711.5,210.4 L710.9,200.8Z"/>
<path d="M805.2,227.6 L795.5,227.4 L800.4,219.1Z"/>
<path d="M867.1,228.9 L859.2,234.6 L858.2,225.1Z"/>
<path d="M656.8,251.9 L664.5,245.9 L665.9,255.4Z"/>
<path d="M743.8,247.8 L748.4,256.5 L738.8,256.2Z"/>
</g>
<g stroke="#26967a" stroke-width="2.2" fill="#26967a">
<line x1="575.0" y1="282.0" x2="580.9" y2="283.3"/><path d="M584.0,284.0 L580.4,285.4 L581.3,281.3Z" stroke="none"/><line x1="599.0" y1="272.0" x2="596.2" y2="276.3"/><path d="M594.5,279.0 L594.5,275.2 L598.0,277.4Z" stroke="none"/><line x1="606.0" y1="289.0" x2="602.0" y2="287.6"/><path d="M599.0,286.5 L602.7,285.6 L601.3,289.6Z" stroke="none"/><line x1="586.0" y1="295.0" x2="586.7" y2="293.4"/><path d="M588.0,290.5 L588.6,294.3 L584.8,292.6Z" stroke="none"/><line x1="647.0" y1="230.0" x2="652.9" y2="231.3"/><path d="M656.0,232.0 L652.4,233.4 L653.3,229.3Z" stroke="none"/><line x1="671.0" y1="220.0" x2="668.2" y2="224.3"/><path d="M666.5,227.0 L666.5,223.2 L670.0,225.4Z" stroke="none"/><line x1="678.0" y1="237.0" x2="674.0" y2="235.6"/><path d="M671.0,234.5 L674.7,233.6 L673.3,237.6Z" stroke="none"/><line x1="658.0" y1="243.0" x2="658.7" y2="241.4"/><path d="M660.0,238.5 L660.6,242.3 L656.8,240.6Z" stroke="none"/><line x1="750.0" y1="224.5" x2="755.9" y2="225.8"/><path d="M759.0,226.5 L755.4,227.9 L756.3,223.8Z" stroke="none"/><line x1="774.0" y1="214.5" x2="771.2" y2="218.8"/><path d="M769.5,221.5 L769.5,217.7 L773.0,219.9Z" stroke="none"/><line x1="781.0" y1="231.5" x2="777.0" y2="230.1"/><path d="M774.0,229.0 L777.7,228.1 L776.3,232.1Z" stroke="none"/><line x1="761.0" y1="237.5" x2="761.7" y2="235.9"/><path d="M763.0,233.0 L763.6,236.8 L759.8,235.1Z" stroke="none"/><line x1="824.0" y1="268.5" x2="829.9" y2="269.8"/><path d="M833.0,270.5 L829.4,271.9 L830.3,267.8Z" stroke="none"/><line x1="848.0" y1="258.5" x2="845.2" y2="262.8"/><path d="M843.5,265.5 L843.5,261.7 L847.0,263.9Z" stroke="none"/><line x1="855.0" y1="275.5" x2="851.0" y2="274.1"/><path d="M848.0,273.0 L851.7,272.1 L850.3,276.1Z" stroke="none"/><line x1="835.0" y1="281.5" x2="835.7" y2="279.9"/><path d="M837.0,277.0 L837.6,280.8 L833.8,279.1Z" stroke="none"/><line x1="889.5" y1="241.0" x2="889.3" y2="236.2"/><path d="M889.2,233.0 L891.4,236.1 L887.2,236.3Z" stroke="none"/><line x1="630.0" y1="297.0" x2="634.9" y2="298.5"/><path d="M638.0,299.5 L634.3,300.5 L635.6,296.5Z" stroke="none"/><line x1="798.0" y1="334.0" x2="794.1" y2="333.2"/><path d="M791.0,332.5 L794.6,331.1 L793.7,335.2Z" stroke="none"/><line x1="750.0" y1="256.0" x2="748.1" y2="259.2"/><path d="M746.5,262.0 L746.3,258.2 L749.9,260.3Z" stroke="none"/>
</g>
<g>
<use href="#ball" x="589.2" y="259.6"/><use href="#ball" x="589.7" y="263.8"/>
<use href="#ball" x="586.6" y="283.6"/><use href="#ball" x="592.8" y="282"/><use href="#ball" x="595.6" y="286"/><use href="#ball" x="589.7" y="288"/>
<use href="#ball" x="661" y="208.4"/><use href="#ball" x="661.4" y="211.8"/>
<use href="#ball" x="658.9" y="232"/><use href="#ball" x="663.9" y="230.3"/><use href="#ball" x="667.3" y="234.5"/><use href="#ball" x="661.4" y="236.1"/>
<use href="#ball" x="764.3" y="202.6"/><use href="#ball" x="764.3" y="206.8"/>
<use href="#ball" x="761.8" y="226"/><use href="#ball" x="768.5" y="224.9"/><use href="#ball" x="770.5" y="228.6"/><use href="#ball" x="764.3" y="230.3"/>
<use href="#ball" x="838.2" y="247"/><use href="#ball" x="838.2" y="250.4"/><use href="#ball" x="834.8" y="232.3"/>
<use href="#ball" x="835.7" y="270.5"/><use href="#ball" x="842" y="268.9"/><use href="#ball" x="844.4" y="272.6"/><use href="#ball" x="838.2" y="274.8"/>
<use href="#ball" x="888.6" y="226"/><use href="#ball" x="888.9" y="229.4"/>
<use href="#ball" x="742.2" y="241"/><use href="#ball" x="744.2" y="268.9"/><use href="#ball" x="715.6" y="263.8"/><use href="#ball" x="685.2" y="269.2"/><use href="#ball" x="660" y="282"/>
<use href="#ball" x="643" y="299.8"/><use href="#ball" x="647.5" y="300.7"/><use href="#ball" x="637.1" y="320"/><use href="#ball" x="643.6" y="339.5"/><use href="#ball" x="661.2" y="355.6"/>
<use href="#ball" x="687.3" y="365.6"/><use href="#ball" x="689.2" y="362"/><use href="#ball" x="717.6" y="367.3"/><use href="#ball" x="748" y="362"/><use href="#ball" x="773.3" y="349.3"/>
<use href="#ball" x="785.6" y="331.1"/><use href="#ball" x="790.1" y="332.3"/><use href="#ball" x="783.6" y="306.2"/><use href="#ball" x="784" y="310.1"/>
</g>
<!-- axis triad -->
<g stroke-linecap="round">
<line x1="429" y1="484.5" x2="442" y2="487.3" stroke="#e01818" stroke-width="2.6"/>
<path d="M441,483.8 L447.5,488.5 L440.5,490.8Z" fill="#e01818"/>
<line x1="430" y1="483" x2="435" y2="476" stroke="#18b018" stroke-width="2.2"/>
<circle cx="435.5" cy="474.5" r="2.6" fill="#18b018"/>
<line x1="428.8" y1="484" x2="428.6" y2="475" stroke="#1028e0" stroke-width="2.8"/>
<circle cx="428.5" cy="473" r="3.3" fill="#1028e0"/>
<circle cx="429" cy="484.8" r="1.9" fill="#f4f4f4"/>
</g>
<g font-family="Liberation Sans" font-style="italic" font-weight="bold" font-size="8.5">
<text x="430" y="469" fill="#3048ff">Z</text>
<text x="437.6" y="471" fill="#38e038">Y</text>
<text x="447" y="484.5" fill="#ff3838">X</text>
</g>
</svg>




















</div>

<!-- STATUS BAR -->
<div class="a" style="left:5px;top:516px;width:1067px;height:1px;background:#c6cede"></div>
<div class="sb" style="left:7px;width:53px"></div>
<svg class="a" style="left:9px;top:521px" width="12" height="13" viewBox="0 0 12 13"><path d="M1,12 L5,8 M4,6 C2,8 2,10 4,11 C6,12 8,10 7,8 M8,7 C10,5 10,3 9,2 C7,1 5,2 5,4 M5,4 L4,6 M8,7 L7,8 M9,2 L11,0" fill="none" stroke="#222" stroke-width="1.4"/><path d="M1,1 L11,12" stroke="#e8a060" stroke-width="1"/></svg>
<div class="a" style="left:27px;top:521.8px;font-size:9.4px">已脱机</div>
<div class="sb" style="left:60px;width:42px;padding-left:2px">操作模式</div>
<div class="sb" style="left:102px;width:40px;background:#e4e4e4"></div>
<svg class="a" style="left:130px;top:524px" width="8" height="6" viewBox="0 0 8 6"><path d="M1,1 L4,4 L7,1" fill="none" stroke="#666" stroke-width="1"/></svg>
<div class="sb" style="left:142px;width:42px;padding-left:2px">激活测头</div>
<div class="sb" style="left:184px;width:118px;background:#e4e4e4;font-size:10px;padding-left:3px">PH10T A:0,B:0</div>
<svg class="a" style="left:290px;top:524px" width="8" height="6" viewBox="0 0 8 6"><path d="M1,1 L4,4 L7,1" fill="none" stroke="#666" stroke-width="1"/></svg>
<div class="sb" style="left:424px;width:78px;border-color:#8a8a8a;border-radius:2px"></div>
<svg class="a" style="left:427px;top:521px" width="14" height="12" viewBox="0 0 14 12"><path d="M1,1.5 L5.5,1.5 C6.5,1.5 7,2 7,3 L7,10.5 C7,9.5 6.5,9 5.5,9 L1,9Z M7,3 C7,2 7.5,1.5 8.5,1.5 L13,1.5 L13,9 L8.5,9 C7.5,9 7,9.5 7,10.5" fill="#fafafa" stroke="#333" stroke-width="1.1"/><path d="M9,5.5 L10.2,6.8 L12,3.8" fill="none" stroke="#333" stroke-width="1"/></svg>
<div class="a" style="left:441.5px;top:521.8px;font-size:9.3px">自学习已开启</div>
<div class="sb" style="left:722px;width:87px"></div>
<svg class="a" style="left:724px;top:520px" width="14" height="14" viewBox="0 0 14 14"><rect x="2" y="2" width="10" height="10" fill="none" stroke="#222" stroke-width="1.6"/><path d="M4,6 L8,10 M6,4 L10,8" stroke="#222" stroke-width="1.1"/><path d="M0.5,0.5 L13.5,13.5" stroke="#222" stroke-width="1.6"/></svg>
<div class="a" style="left:738.5px;top:521.8px;font-size:9.4px">未开启安全平面</div>
<div class="sb" style="left:809px;width:16px;font-weight:bold;font-size:11.5px;padding-left:3px">X</div>
<div class="sb mono" style="left:825px;width:71px;padding-left:3px">0.0000000</div>
<div class="sb" style="left:896px;width:16px;font-weight:bold;font-size:11.5px;padding-left:3px">Y</div>
<div class="sb mono" style="left:912px;width:71px;padding-left:3px">0.0000000</div>
<div class="sb" style="left:983px;width:16px;font-weight:bold;font-size:11.5px;padding-left:3px">Z</div>
<div class="sb mono" style="left:999px;width:71px;padding-left:3px">0.0000000</div>
</body></html>
